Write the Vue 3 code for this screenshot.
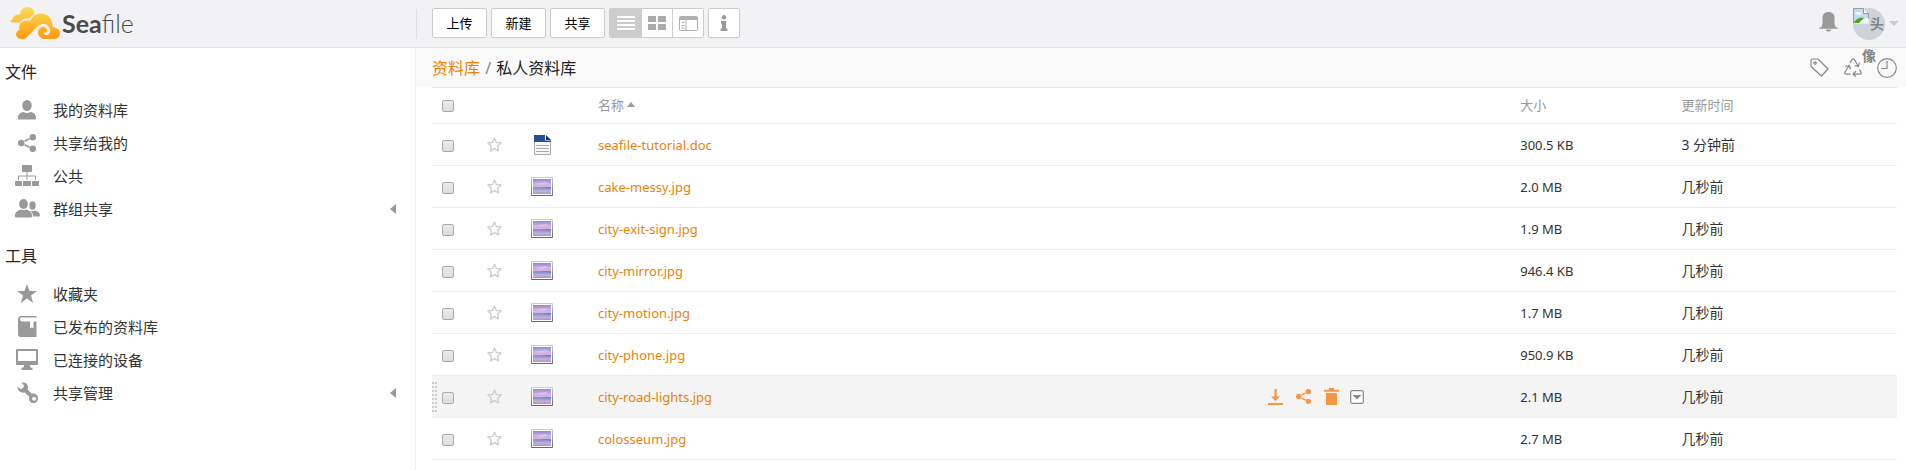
<script setup>
import { ref } from 'vue'

const sections = [
  {
    title: '文件',
    items: [
      { icon: 'user', label: '我的资料库' },
      { icon: 'share', label: '共享给我的' },
      { icon: 'sitemap', label: '公共' },
      { icon: 'group', label: '群组共享', expandable: true },
    ],
  },
  {
    title: '工具',
    items: [
      { icon: 'star', label: '收藏夹' },
      { icon: 'book', label: '已发布的资料库' },
      { icon: 'monitor', label: '已连接的设备' },
      { icon: 'wrench', label: '共享管理', expandable: true },
    ],
  },
]

const files = [
  { name: 'seafile-tutorial.doc', type: 'doc', size: '300.5 KB', time: '3 分钟前' },
  { name: 'cake-messy.jpg', type: 'image', size: '2.0 MB', time: '几秒前' },
  { name: 'city-exit-sign.jpg', type: 'image', size: '1.9 MB', time: '几秒前' },
  { name: 'city-mirror.jpg', type: 'image', size: '946.4 KB', time: '几秒前' },
  { name: 'city-motion.jpg', type: 'image', size: '1.7 MB', time: '几秒前' },
  { name: 'city-phone.jpg', type: 'image', size: '950.9 KB', time: '几秒前' },
  { name: 'city-road-lights.jpg', type: 'image', size: '2.1 MB', time: '几秒前' },
  { name: 'colosseum.jpg', type: 'image', size: '2.7 MB', time: '几秒前' },
]

const active = ref('city-road-lights.jpg')
</script>

<template>
  <div class="page">
    <svg class="defs" aria-hidden="true">
      <defs>
        <linearGradient id="cloud" x1="0" y1="0" x2="0" y2="32" gradientUnits="userSpaceOnUse">
          <stop offset="0" stop-color="#fddc5a" />
          <stop offset="1" stop-color="#ff9a0c" />
        </linearGradient>
        <linearGradient id="sky" x1="0" y1="0" x2="0" y2="1">
          <stop offset="0" stop-color="#8a8ad8" />
          <stop offset=".3" stop-color="#cbaee2" />
          <stop offset=".52" stop-color="#d3b4e0" />
          <stop offset=".58" stop-color="#6f93cc" />
          <stop offset=".68" stop-color="#9f9cd0" />
          <stop offset=".82" stop-color="#cdaeda" />
          <stop offset="1" stop-color="#a893c9" />
        </linearGradient>
        <linearGradient id="frame" x1="0" y1="0" x2="0" y2="1">
          <stop offset="0" stop-color="#cfcfcf" />
          <stop offset="1" stop-color="#666" />
        </linearGradient>
      </defs>
    </svg>

    <header class="topbar">
      <div class="brand">
        <a class="logo" href="#">
          <svg width="50" height="32" viewBox="0 0 50 32" fill="url(#cloud)" aria-hidden="true">
            <path d="M0 13.500C2 13.500 2.500 12.500 3 11C4 8.500 7 7 10 7.800C10.300 3 13.500 0 17.500 0C21.500 0 24.500 3 24.500 7C21.500 8.500 20.500 10 19.500 12C15 10.800 12 12 10 15.300C6 16 .5 16 0 13.500Z" />
            <path d="M12 32C8 32 6 29.500 6 27C6 25.500 7 24 9.500 22.500C8 17 12 12.500 20.500 13.800C22 9 26.500 6.500 31.500 6.500C38 6.500 42.500 11.500 42.500 20C46.500 20.500 50 22.500 50 26C50 29.500 47.500 32 44 32H35C31 32 28 29 28 25.500C28 22 31 19.500 34 20C36.500 20.400 37.800 22.500 37 24.500C36.400 25.800 35 26.200 33.800 25.300C33.500 27.300 35 28.500 36.700 28.200C39.500 27.700 40.800 25 40 22.200C39 18.500 35.500 16.500 31.800 17.200C28 18 26 21 23 24L17 30C15.500 31.500 14 32 12 32Z" />
          </svg>
          <span class="logo-text"><b>Sea</b>file</span>
        </a>
      </div>

      <div class="toolbar">
        <button class="btn text-btn" type="button">上传</button>
        <button class="btn text-btn" type="button">新建</button>
        <button class="btn text-btn" type="button">共享</button>
        <div class="view-group">
          <button class="view selected" type="button" aria-label="列表">
            <svg width="18" height="14" viewBox="0 0 18 14" fill="#fff"><path d="M0 0h18v2H0zM0 4h18v2H0zM0 8h18v2H0zM0 12h18v2H0z" /></svg>
          </button>
          <button class="view" type="button" aria-label="网格">
            <svg width="18" height="14" viewBox="0 0 18 14" fill="#aaa"><path d="M0 0h8v6H0zM10 0h8v6h-8zM0 8h8v6H0zM10 8h8v6h-8z" /></svg>
          </button>
          <button class="view" type="button" aria-label="分栏">
            <svg width="19" height="15" viewBox="0 0 19 15" fill="none" stroke="#b0b0b0"><rect x=".5" y=".5" width="18" height="14" rx="1" /><path d="M1 2.500h17" stroke-width="3" /><path d="M7 4v10" /><path d="M2.500 6.500h3M2.500 9.500h3M2.500 12h3" /></svg>
          </button>
        </div>
        <button class="btn info" type="button" aria-label="信息">
          <svg width="8" height="16" viewBox="0 0 8 16" fill="#999"><circle cx="4" cy="2.300" r="2.200" /><path d="M1 6h5v7.500h1.500V16H.5v-2.500H2v-5H1z" /></svg>
        </button>
      </div>

      <div class="account">
        <button class="plain" type="button" aria-label="通知">
          <svg width="19" height="20" viewBox="0 0 19 20" fill="#999"><path d="M9.500 0C13.500 0 15.500 2.500 15.500 6v5.500L16.500 15l2.500 1v.8H0V16l2.500-1 1-3.500V6C3.500 2.500 5.500 0 9.500 0ZM6.700 17.500h5.600C12 19 11 19.500 9.500 19.500S7 19 6.700 17.500Z" /></svg>
        </button>
        <a class="avatar" href="#">
          <svg width="16" height="16" viewBox="0 0 16 16">
            <path d="M.5.500h10l5 5v10H.5z" fill="#fff" /><path d="M1 1h9.500v5H15v4L1 14z" fill="#c3d9f5" />
            <path d="M2.500 6.500a2 2 0 0 1 3-2 2 2 0 0 1 3 2z" fill="#fff" />
            <path d="M1 15c1-4 6-6 10-5l-5 5z" fill="#4da52a" /><path d="m8 15 5-5h2v5z" fill="#f5f5f5" />
            <path d="M.5 15.500V.5h10l5 5v5" fill="none" stroke="#999" /><path d="M10.500.500v5h5" fill="#fff" stroke="#999" />
          </svg>头像
        </a>
        <span class="account-caret"></span>
      </div>
    </header>

    <div class="body">
      <nav class="side">
        <section v-for="section in sections" :key="section.title">
          <h3>{{ section.title }}</h3>
          <ul>
            <li v-for="item in section.items" :key="item.label">
              <a href="#">
                <span class="side-icon">
                  <svg v-if="item.icon === 'user'" width="18" height="20" viewBox="0 0 18 20"><ellipse cx="9" cy="5.500" rx="4.700" ry="5.500" /><path d="M0 18c0-4 2.500-5.500 5.500-6 2 1.300 5 1.300 7 0 3 .5 5.500 2 5.500 6 0 1-.5 1.500-1.500 1.500h-15C.5 19.500 0 19 0 18Z" /></svg>
                  <svg v-else-if="item.icon === 'share'" width="18" height="18" viewBox="0 0 18 18"><circle cx="3.200" cy="9" r="3.200" /><circle cx="14.800" cy="3.200" r="3.200" /><circle cx="14.800" cy="14.800" r="3.200" /><path d="m6.500 7.300 5-2.600M6.500 10.700l5 2.600" stroke="#999" stroke-width="1.800" /></svg>
                  <svg v-else-if="item.icon === 'sitemap'" width="24" height="21" viewBox="0 0 24 21"><rect x="7" width="10" height="7" rx="1" /><rect y="16" width="7" height="5" rx="1" /><rect x="8" y="16" width="8" height="5" rx="1" /><rect x="17" y="16" width="7" height="5" rx="1" /><path d="M3.500 15v-4h17v4M12 7v8" fill="none" stroke="#999" /></svg>
                  <svg v-else-if="item.icon === 'group'" width="25" height="19" viewBox="0 0 25 19"><ellipse cx="8.500" cy="5" rx="4.300" ry="5" /><ellipse cx="17.500" cy="6.500" rx="3.200" ry="4.200" /><path d="M0 17c0-4 2-5 6-6.500 1.500.8 3.500.8 5 0 4 1.500 6 2.500 6 6.500 0 1-.3 1.500-1.300 1.500H1.300C.3 18.500 0 18 0 17ZM15 11.500c1.500.8 3.500.8 5 0 3 .8 5 2 5 5-.2.800-.5 1-1.300 1H18c0-3-1-4.500-3-6Z" /></svg>
                  <svg v-else-if="item.icon === 'star'" width="20" height="19" viewBox="0 0 20 19"><path d="m10 0 2.500 7H20l-6 4.500 2.200 7.500L10 14.500 3.800 19 6 11.500 0 7h7.500z" /></svg>
                  <svg v-else-if="item.icon === 'book'" width="19" height="21" viewBox="0 0 19 21"><path d="M3.500 0H18.500v1.500H4C2.500 1.500 2 2.200 2 3.200S2.700 5.500 4 5.500h8v7l1.700-1.300L15.500 12.500V5.500h3V21H2.500C1 21 0 20 0 18.500V3.500C0 1.500 1.500 0 3.500 0Z" /></svg>
                  <svg v-else-if="item.icon === 'monitor'" width="22" height="21" viewBox="0 0 22 21"><path fill-rule="evenodd" d="M1 0h20a1 1 0 0 1 1 1v14a1 1 0 0 1-1 1h-7v2l2.500 1.200V21h-11v-1.800L8 18v-2H1a1 1 0 0 1-1-1V1a1 1 0 0 1 1-1Zm1 2v10h18V2Z" /></svg>
                  <svg v-else width="21" height="21" viewBox="0 0 21 21"><path fill-rule="evenodd" d="M4.500.800C8 -.3 11 2 11 5c0 1-.2 1.800-.5 2.500l4.300 4.300c3-1 6.200 1 6.200 4.700a4.500 4.500 0 0 1-9 .3c0-.8.1-1.500.3-2L7.800 10.500C4.500 11.500.5 9 .3 4.800l3.700 2.400 3-2.200-.3-2ZM17 14.700a2 2 0 1 0 0 4 2 2 0 0 0 0-4Z" /></svg>
                </span>
                <span>{{ item.label }}</span>
                <span v-if="item.expandable" class="toggle"></span>
              </a>
            </li>
          </ul>
        </section>
      </nav>

      <main class="main">
        <div class="path-bar">
          <div class="path"><a href="#">资料库</a> <span class="slash">/</span> 私人资料库</div>
          <div class="path-tools">
            <button class="plain" type="button" aria-label="标签">
              <svg width="19" height="19" viewBox="0 0 19 19" fill="none" stroke="#888" stroke-width="1.200"><path d="M1 2.500Q1 1 2.500 1H8l10 10-6.500 7L1 8.500Z" stroke-linejoin="round" /><circle cx="5" cy="5" r="1.200" /></svg>
            </button>
            <button class="plain recycle" type="button" aria-label="回收站">
              <svg width="18" height="19" viewBox="0 0 18 19" fill="none" stroke="#888" stroke-width="1.200"><path d="M6 5 8 1.500Q9.300.3 10.500 1.500L14 8M10.800 7.500l3.700 1 .8-3.800M15.500 11.500l1.700 3Q17.500 16 16 16.200H9.500M12 13.300l-3 2.900 3 2.500M6.500 16.200H2Q.3 16 1 14.200L4.800 8M1.500 8.500l3.800-1 1.200 3.800" /></svg>
            </button>
            <button class="plain" type="button" aria-label="历史">
              <svg width="20" height="20" viewBox="0 0 20 20" fill="none" stroke="#888" stroke-width="1.200"><circle cx="10" cy="10" r="9.300" /><path d="M10 3v7.500H4" /></svg>
            </button>
          </div>
        </div>

        <div class="table-wrap">
          <table>
            <colgroup>
              <col class="c-check" /><col class="c-star" /><col class="c-icon" /><col />
              <col class="c-ops" /><col class="c-size" /><col class="c-time" />
            </colgroup>
            <thead>
              <tr>
                <th><input type="checkbox" aria-label="全选" /></th>
                <th></th>
                <th></th>
                <th><a class="sort" href="#">名称<span class="sort-caret"></span></a></th>
                <th></th>
                <th>大小</th>
                <th>更新时间</th>
              </tr>
            </thead>
            <tbody>
              <tr v-for="file in files" :key="file.name" :class="{ active: file.name === active }">
                <td class="check">
                  <span v-if="file.name === active" class="drag"></span>
                  <input type="checkbox" :aria-label="file.name" />
                </td>
                <td>
                  <button class="plain" type="button" aria-label="收藏">
                    <svg width="15" height="15" viewBox="0 0 15 15" fill="none" stroke="#ccc" stroke-width="1.300" stroke-linejoin="round"><path d="m7.500 1.200 1.900 4.200 4.700.6-3.400 3.200.8 4.700-4-2.300-4 2.300.8-4.700L.9 6l4.700-.6z" /></svg>
                  </button>
                </td>
                <td>
                  <svg v-if="file.type === 'doc'" class="file-icon" width="22" height="20" viewBox="0 0 22 20">
                    <path d="M3.500 6v13.500h16V6" fill="#f8f8f8" stroke="#aaa" /><path d="M3 0h11v5.500h6V7H3z" fill="#25508f" /><path d="M15 0v5h5z" fill="#163a70" />
                    <path d="M5 10.500h13M5 13.500h13M5 16.500h13" stroke="#aaa" />
                  </svg>
                  <svg v-else class="file-icon" width="22" height="19" viewBox="0 0 22 19">
                    <rect width="22" height="19" rx="1" fill="url(#frame)" /><rect x="1" y="1" width="20" height="17" fill="#fff" /><rect x="2" y="2" width="18" height="15" fill="url(#sky)" />
                    <path d="M10 10h10v2z" fill="#4f7fbd" opacity=".6" /><path d="M4 7 14 5l4 1.500-8 1.500z" fill="#f1c6e4" opacity=".7" />
                  </svg>
                </td>
                <td><a href="#">{{ file.name }}</a></td>
                <td>
                  <div v-if="file.name === active" class="ops">
                    <button class="plain" type="button" aria-label="下载">
                      <svg width="15" height="16" viewBox="0 0 15 16" fill="#f59642"><path d="M6.500 0h2.200v7.500H12L7.500 12 3 7.500h3.500zM0 14h15v2H0z" /></svg>
                    </button>
                    <button class="plain" type="button" aria-label="共享">
                      <svg width="15" height="15" viewBox="0 0 18 18" fill="#f59642"><circle cx="3.200" cy="9" r="3.200" /><circle cx="14.800" cy="3.200" r="3.200" /><circle cx="14.800" cy="14.800" r="3.200" /><path d="m6.500 7.300 5-2.600M6.500 10.700l5 2.600" stroke="#f59642" stroke-width="1.800" /></svg>
                    </button>
                    <button class="plain" type="button" aria-label="删除">
                      <svg width="15" height="17" viewBox="0 0 15 17" fill="#f59642"><path d="M5 0h5v1.800h5v2H0v-2h5zM2 5h11v12H2z" /></svg>
                    </button>
                    <button class="plain more" type="button" aria-label="更多操作">
                      <svg width="14" height="14" viewBox="0 0 14 14"><rect x=".7" y=".7" width="12.600" height="12.600" rx="1.500" fill="#fff" stroke="#888" stroke-width="1.200" /><path d="M2.500 5h9L7 9.500z" fill="#888" /></svg>
                    </button>
                  </div>
                </td>
                <td>{{ file.size }}</td>
                <td class="time">{{ file.time }}</td>
              </tr>
            </tbody>
          </table>
        </div>
      </main>
    </div>
  </div>
</template>

<style>
body { background: #fff; }
</style>

<style scoped>
.page {
  min-height: 100vh;
  display: flex;
  flex-direction: column;
  font-family: "Noto Sans", "Noto Sans CJK SC", sans-serif;
  font-size: 13px;
  line-height: 20px;
  color: #333;
}
.page *, .page { box-sizing: border-box; }
.defs { position: absolute; width: 0; height: 0; }
a { color: #eb8205; text-decoration: none; }
svg { display: block; flex: none; }
button { font: inherit; color: inherit; cursor: pointer; }
.plain { display: block; border: 0; padding: 0; background: none; }

.topbar {
  display: flex;
  height: 48px;
  background: #f2f2f5;
  border-bottom: 1px solid #e5e5e8;
}
.brand { width: 416px; flex: none; padding: 7px 0 0 10px; }
.logo { display: flex; align-items: center; gap: 2px; color: #4a4a4a; }
.logo-text { font-family: Lato, sans-serif; font-size: 25px; line-height: 32px; font-weight: 300; }
.logo-text b { font-weight: 700; }
.toolbar {
  display: flex;
  flex: 1;
  gap: 4px;
  padding: 8px 0 0 16px;
  background: linear-gradient(#ddd, #ddd) 0 9px / 1px 30px no-repeat;
}
.btn {
  height: 30px;
  padding: 0;
  display: flex;
  align-items: center;
  justify-content: center;
  background: #fff;
  border: 1px solid #ccc;
  border-radius: 2px;
  color: #000;
}
.text-btn { width: 55px; }
.info { width: 32px; }
.view-group {
  display: flex;
  height: 30px;
  border: 1px solid #ccc;
  border-radius: 2px;
  overflow: hidden;
  background: #fff;
}
.view {
  width: 31px;
  padding: 0;
  display: flex;
  align-items: center;
  justify-content: center;
  background: #fff;
  border: 0;
}
.view + .view { border-left: 1px solid #ccc; }
.view.selected { background: #ccc; }
.account { display: flex; align-items: center; padding-right: 7px; }
.account button { margin-bottom: 4px; }
.avatar {
  width: 32px;
  height: 32px;
  margin: 0 4px 0 15px;
  border-radius: 50%;
  background: #ced3da;
  color: #808488;
  font-size: 14px;
  font-weight: 700;
  line-height: 32px;
  text-align: center;
  z-index: 1;
}
.avatar svg { float: left; }
.account-caret { border: 5px solid transparent; border-top-color: #ccc; border-bottom: 0; }

.body { display: flex; flex: 1; }
.side {
  width: 416px;
  flex: none;
  border-right: 1px solid #eee;
  font-size: 15px;
}
.side h3 {
  margin: 0;
  padding: 12px 0 0 5px;
  font-size: 16px;
  line-height: 24px;
  font-weight: 400;
  color: #322;
}
.side section + section { padding-top: 7px; }
.side ul { list-style: none; margin: 0; padding: 9px 0 0; }
.side section li a {
  display: flex;
  align-items: center;
  height: 33px;
  padding: 0 19px 0 9px;
  color: #333;
}
.side-icon { width: 36px; margin-right: 8px; display: flex; justify-content: center; }
.side-icon svg { fill: #999; }
.toggle { margin-left: auto; border: 5px solid transparent; border-right: 6px solid #999; border-left: 0; }

.main { flex: 1; min-width: 0; }
.path-bar {
  display: flex;
  justify-content: space-between;
  align-items: center;
  height: 39px;
  padding: 0 9px 0 16px;
  background: #f9f9f9;
}
.path { font-size: 16px; line-height: 24px; color: #222; }
.slash { margin: 0 1px; color: #888; }
.path-tools { display: flex; align-items: center; gap: 15px; }

.table-wrap { padding: 0 9px 0 16px; }
table { width: 100%; table-layout: fixed; border-collapse: separate; border-spacing: 0; border-top: 1px solid #e8e8e8; }
.c-check { width: 45px; }
.c-star { width: 44px; }
.c-icon { width: 67px; }
.c-ops { width: 17.2%; }
.c-size { width: 11%; }
.c-time { width: 15.4%; }
th, td {
  height: 42px;
  padding: 0 0 0 10px;
  text-align: left;
  vertical-align: middle;
  border-bottom: 1px solid #eee;
}
th { height: 36px; padding-bottom: 2px; font-weight: 400; color: #999; }
.time { font-size: 14px; }
.active td { background: #f4f4f4; }
.sort { display: inline-flex; align-items: center; gap: 3px; color: #999; }
.sort-caret { border: 4px solid transparent; border-bottom: 5px solid #999; border-top: 0; }
input[type="checkbox"] {
  appearance: none;
  display: block;
  width: 12px;
  height: 12px;
  margin: 2px 0 0;
  border: 1px solid #aaa;
  border-radius: 2px;
  background: linear-gradient(#eaeaea, #dcdcdc);
}
.check { position: relative; }
.drag {
  position: absolute;
  left: 0;
  top: 6px;
  width: 5px;
  height: 30px;
  background:
    repeating-linear-gradient(#0000 0 2px, #f4f4f4 2px 4px),
    repeating-linear-gradient(90deg, #ccc 0 2px, #f4f4f4 2px 3px);
}
.ops { display: flex; align-items: center; gap: 13px; }
.more { margin-left: -2px; }
</style>
